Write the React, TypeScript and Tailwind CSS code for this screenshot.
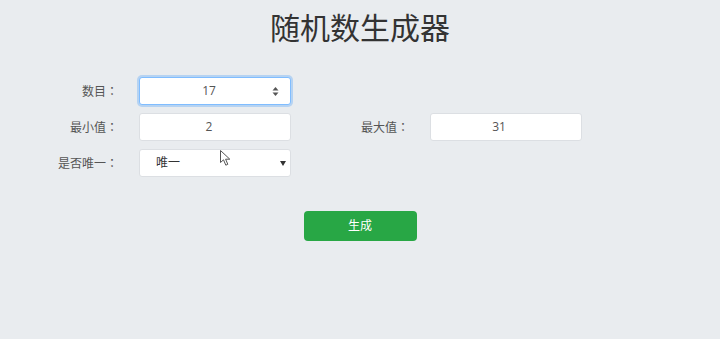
import React from 'react';

const font = { fontFamily: '"Open Sans", "Noto Sans CJK SC", sans-serif' };
const cjk = { fontFamily: '"Noto Sans CJK SC", sans-serif' };
const jp = { fontFamily: '"Noto Sans CJK JP", sans-serif' };

function Label({ text }: { text: string }) {
  return (
    <label style={cjk} className="pr-[21px] flex items-center justify-end h-[28px] text-[#555]">
      {text}
      <span style={jp}>：</span>
    </label>
  );
}

export default function App() {
  return (
    <div
      className="relative w-[720px] h-[339px] bg-[#e9ecef] text-[#444] overflow-hidden"
      style={font}
    >
      <h1 className="pt-[8px] text-center text-[30px] leading-[40px] text-[#333]">随机数生成器</h1>

      <div className="mt-[29px] grid grid-cols-[139px_152px_139px_152px] gap-y-[8px] text-[12px]">
        <Label text="数目" />
        <div className="relative h-[28px] bg-white rounded-[3px] border border-[#80bdff] shadow-[0_0_0_2px_rgba(0,123,255,0.22)] flex items-center justify-center pr-[12px] text-[#555]">
          17
          <svg className="absolute right-[11px] top-[8px]" width="7" height="11" viewBox="0 0 7 11">
            <path d="M3.5 1 L6.5 4.5 H0.5 Z" fill="#555" />
            <path d="M3.5 10 L6.5 6.5 H0.5 Z" fill="#555" />
          </svg>
        </div>
        <div />
        <div />

        <Label text="最小值" />
        <div className="h-[28px] bg-white rounded-[3px] border border-[#dcdfe3] flex items-center justify-center pr-[12px] text-[#555]">
          2
        </div>
        <Label text="最大值" />
        <div className="h-[28px] bg-white rounded-[3px] border border-[#dcdfe3] flex items-center justify-center pr-[14px] text-[#555]">
          31
        </div>

        <Label text="是否唯一" />
        <div className="relative h-[28px] bg-white rounded-[3px] border border-[#dcdfe3] flex items-center pl-[16px] text-[#333]">
          唯一
          <svg className="absolute right-[4px] top-[11px]" width="6" height="5" viewBox="0 0 6 5">
            <path d="M0 0 H6 L3 5 Z" fill="#333" />
          </svg>
        </div>
        <div />
        <div />
      </div>

      <div className="mt-[34px] flex justify-center">
        <button className="w-[113px] h-[30px] rounded-[4px] bg-[#28a745] text-white text-[12px]">
          生成
        </button>
      </div>

      <svg
        className="absolute left-[220px] top-[150px]"
        width="12"
        height="17"
        viewBox="0 0 12 17"
      >
        <path
          d="M0.5 0.5 L0.5 12.5 L3.5 9.8 L5.8 15.2 L7.8 14.3 L5.6 9.2 L9.8 9.2 Z"
          fill="#fff"
          stroke="#555"
          strokeWidth="1"
          strokeLinejoin="round"
        />
      </svg>
    </div>
  );
}
